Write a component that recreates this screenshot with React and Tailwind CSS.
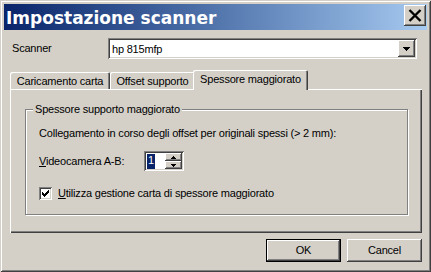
import React from "react";

const raised =
  "shadow-[inset_-1px_-1px_0_#404040,inset_1px_1px_0_#ffffff,inset_-2px_-2px_0_#808080,inset_2px_2px_0_#d4d0c8]";
const sunken =
  "shadow-[inset_1px_1px_0_#808080,inset_-1px_-1px_0_#ffffff,inset_2px_2px_0_#404040,inset_-2px_-2px_0_#d4d0c8]";

function Tab({ label, active, w, className = "" }) {
  return (
    <div
      className={
        "flex items-center justify-center bg-[#d4d0c8] rounded-t-[2px] " +
        "shadow-[inset_1px_1px_0_#ffffff,inset_-1px_0_0_#404040,inset_-2px_0_0_#808080] " +
        (active ? "h-[20px] -mb-[1px] relative z-10 pb-[2px] " : "h-[17px] pt-[1px] ") +
        className
      }
      style={{ width: w }}
    >
      {label}
    </div>
  );
}

export default function App() {
  return (
    <div
      className="w-[431px] h-[272px] bg-[#d4d0c8] p-[4px] flex flex-col text-[11px] leading-[13px] tracking-[-0.2px] text-black shadow-[inset_1px_1px_0_#d4d0c8,inset_-1px_-1px_0_#404040,inset_2px_2px_0_#ffffff,inset_-2px_-2px_0_#808080]"
      style={{ fontFamily: '"Liberation Sans", Arial, sans-serif' }}
    >
      {/* Title bar */}
      <div className="h-[26px] flex items-start justify-between bg-linear-to-r from-[#0a246a] to-[#a6caf0]">
        <div
          className="pl-[2px] pt-[4px] text-white font-bold text-[17px] leading-[20px] tracking-normal"
          style={{ fontFamily: '"DejaVu Sans", Verdana, sans-serif' }}
        >
          Impostazione scanner
        </div>
        <div className={"w-[22px] h-[21px] mt-[1px] mr-[1px] bg-[#d4d0c8] flex items-center justify-center " + raised}>
          <svg width="14" height="13" viewBox="0 0 14 13">
            <path d="M1.5 1L12.5 12M12.5 1L1.5 12" stroke="#000" strokeWidth="2.4" fill="none" />
          </svg>
        </div>
      </div>

      {/* Scanner row */}
      <div className="flex items-center mt-[8px] pl-[8px] pr-[10px]">
        <div className="w-[96px]">Scanner</div>
        <div className={"flex-1 h-[21px] bg-white flex items-center p-[2px] " + sunken}>
          <div className="flex-1 pl-[2px] pt-[1px]">hp 815mfp</div>
          <div className={"w-[17px] h-[17px] bg-[#d4d0c8] flex items-center justify-center " + raised}>
            <svg width="7" height="4" viewBox="0 0 7 4" shapeRendering="crispEdges">
              <path d="M0 0h7L3.5 4z" fill="#000" />
            </svg>
          </div>
        </div>
      </div>

      {/* Tabs */}
      <div className="flex items-end h-[19px] mt-[11px] ml-[6px]">
        <Tab label="Caricamento carta" w={100} />
        <Tab label="Offset supporto" w={85} />
        <Tab label="Spessore maggiorato" w={115} active className="-ml-[2px]" />
      </div>

      {/* Panel */}
      <div className="h-[144px] ml-[6px] mr-[5px] pt-[20px] pl-[15px] pr-[14px] shadow-[inset_1px_1px_0_#ffffff,inset_-1px_-1px_0_#404040,inset_-2px_-2px_0_#808080]">
        <div className="relative h-[106px] border border-[#808080] shadow-[inset_1px_1px_0_#ffffff,1px_1px_0_#ffffff] pl-[13px] pt-[17px]">
          <div className="absolute -top-[7px] left-[7px] px-[2px] bg-[#d4d0c8]">
            Spessore supporto maggiorato
          </div>
          <div>Collegamento in corso degli offset per originali spessi (&gt; 2 mm):</div>
          <div className="flex items-center mt-[11px]">
            <div className="w-[105px]">
              <span className="underline">V</span>ideocamera A-B:
            </div>
            <div className={"w-[40px] h-[20px] bg-white flex p-[2px] " + sunken}>
              <div className="flex-1 pl-[1px] pt-[1px]">
                <span className="inline-block bg-[#0a246a] text-white h-[15px] px-[1px]">1</span>
              </div>
              <div className="w-[17px] flex flex-col">
                <div className={"h-[8px] bg-[#d4d0c8] flex items-center justify-center " + raised}>
                  <svg width="5" height="3" viewBox="0 0 5 3" shapeRendering="crispEdges">
                    <path d="M2.5 0L5 3H0z" fill="#000" />
                  </svg>
                </div>
                <div className={"h-[8px] bg-[#d4d0c8] flex items-center justify-center " + raised}>
                  <svg width="5" height="3" viewBox="0 0 5 3" shapeRendering="crispEdges">
                    <path d="M0 0h5L2.5 3z" fill="#000" />
                  </svg>
                </div>
              </div>
            </div>
          </div>
          <div className="flex items-center mt-[16px]">
            <div className={"w-[13px] h-[13px] bg-white flex items-center justify-center " + sunken}>
              <svg width="7" height="7" viewBox="0 0 7 7" shapeRendering="crispEdges">
                <path d="M0 2h1v1h1v1h1V3h1V2h1V1h1V0h1v3H6v1H5v1H4v1H3v1H2V6H1V5H0z" fill="#000" />
              </svg>
            </div>
            <div className="ml-[6px]">
              <span className="underline">U</span>tilizza gestione carta di spessore maggiorato
            </div>
          </div>
        </div>
      </div>

      {/* Buttons */}
      <div className="flex justify-end gap-[6px] mt-[6px] mr-[5px]">
        <div className="w-[75px] h-[23px] border border-black">
          <div className={"w-full h-full flex items-center justify-center bg-[#d4d0c8] " + raised}>OK</div>
        </div>
        <div className={"w-[75px] h-[23px] flex items-center justify-center bg-[#d4d0c8] " + raised}>Cancel</div>
      </div>
    </div>
  );
}
